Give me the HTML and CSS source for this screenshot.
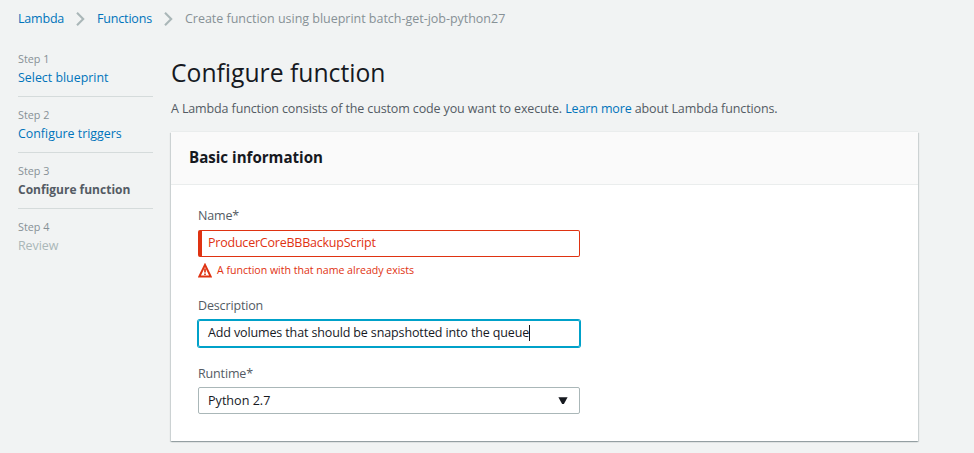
FILE: index.html
```
<!DOCTYPE html>
<html lang="en">
<head>
<meta charset="utf-8">
<title>Configure function</title>
<link rel="stylesheet" href="styles.css">
</head>
<body>
<nav class="breadcrumb">
  <a class="crumb-lambda" href="#">Lambda</a>
  <svg class="chevron" width="9" height="14" viewBox="0 0 9 14"><path d="M1 .8l6.2 6.2L1 13.2"/></svg>
  <a class="crumb-functions" href="#">Functions</a>
  <svg class="chevron" width="9" height="14" viewBox="0 0 9 14"><path d="M1 .8l6.2 6.2L1 13.2"/></svg>
  <span class="crumb-current">Create function using blueprint batch-get-job-python27</span>
</nav>
<div class="layout">
  <ol class="steps">
    <li><small>Step 1</small><a href="#">Select blueprint</a></li>
    <li><small>Step 2</small><a href="#">Configure triggers</a></li>
    <li><small>Step 3</small><strong>Configure function</strong></li>
    <li><small>Step 4</small><span class="pending">Review</span></li>
  </ol>
  <main>
    <h1>Configure function</h1>
    <p class="intro">A Lambda function consists of the custom code you want to execute. <a href="#">Learn more</a> about Lambda functions.</p>
    <section class="card">
      <h2>Basic information</h2>
      <div class="form">
        <div class="label">Name*</div>
        <div class="field invalid">ProducerCoreBBBackupScript</div>
        <div class="error">
          <svg width="14" height="15" viewBox="0 0 14 15"><path class="outline" d="M7 1.9L12.7 13.6H1.3Z"/><path class="mark" d="M7 5.6v3.8M7 10.4v1.6"/></svg>
          <span>A function with that name already exists</span>
        </div>
        <div class="label">Description</div>
        <div class="field focused">Add volumes that should be snapshotted into the queue<i class="caret"></i></div>
        <div class="label label-runtime">Runtime*</div>
        <div class="field select"><span>Python 2.7</span><svg width="10" height="8" viewBox="0 0 10 8"><path d="M.4.3h9.2L5.9 7.1H4.1Z"/></svg></div>
      </div>
    </section>
  </main>
</div>
</body>
</html>
```
FILE: styles.css
```
* { box-sizing: border-box; }
body {
  margin: 0;
  height: 453px;
  overflow: hidden;
  background: #f1f3f3;
  color: #545b64;
  font: 12.5px/18px "Open Sans", "Noto Sans", sans-serif;
}
a { color: #0073bb; text-decoration: none; }
.breadcrumb {
  display: flex;
  align-items: center;
  height: 18px;
  margin: 10px 0 0 18px;
  color: #879196;
  white-space: nowrap;
}
.crumb-lambda { width: 46px; letter-spacing: -.2px; }
.crumb-functions { width: 55px; letter-spacing: -.17px; }
.crumb-current { letter-spacing: -.02px; }
.chevron { margin: 0 12px; fill: none; stroke: #aab7b8; stroke-width: 2.1; }
.layout { display: flex; padding-left: 18px; }
.steps {
  width: 135px;
  margin: 22px 18px 0 0;
  padding: 0;
  list-style: none;
}
.steps li {
  height: 56px;
  border-bottom: 1px solid #d5dbdb;
  display: flex;
  flex-direction: column;
}
.steps li:first-child { height: 47px; }
.steps li + li small { margin-top: 9px; }
.steps li:last-child { border: 0; }
.steps small {
  margin-bottom: 1px;
  color: #879196;
  font-size: 10.8px;
  line-height: 18px;
}
.steps a { font-size: 12.4px; }
.steps strong { font-size: 12px; }
.pending { color: #aab7b8; letter-spacing: -.1px; }
main { width: 747px; }
h1 {
  margin: 27px 0 0;
  color: #16191f;
  font-size: 24.7px;
  font-weight: 400;
  line-height: 36px;
}
.intro { margin: 9px 0 0; letter-spacing: -.125px; white-space: nowrap; }
.card {
  height: 309px;
  margin-top: 14px;
  background: #fff;
  box-shadow: 0 1px 1px rgba(0, 28, 36, .2), 1px 1px 1px rgba(0, 28, 36, .12), -1px 1px 1px rgba(0, 28, 36, .12), 0 -1px 0 #eaeded;
}
h2 {
  height: 53px;
  margin: 0;
  padding-left: 18px;
  border-bottom: 1px solid #eaeded;
  background: #fafafa;
  color: #16191f;
  font-size: 15.1px;
  line-height: 51px;
}
.form { width: 409px; padding: 22px 0 0 27px; }
.label { margin-bottom: 5px; letter-spacing: -.15px; }
.field {
  height: 27px;
  padding-left: 9px;
  border: 1px solid #aab7b8;
  border-radius: 2px;
  color: #16191f;
  line-height: 24px;
  letter-spacing: -.13px;
  white-space: nowrap;
}
.invalid {
  border-color: #df3312;
  border-left-width: 4px;
  padding-left: 6px;
  color: #df3312;
  letter-spacing: -.22px;
}
.error {
  display: flex;
  align-items: center;
  gap: 5px;
  height: 18px;
  margin: 4px 0 18px;
  color: #df3312;
  font-size: 10.6px;
  letter-spacing: -.02px;
}
.error svg { fill: none; stroke: #df3312; }
.outline { stroke-width: 2; }
.mark { stroke-width: 1.7; }
.focused { border-color: #00a1c9; box-shadow: 0 0 0 1px #00a1c9; }
.caret {
  display: inline-block;
  width: 1px;
  height: 16px;
  background: #16191f;
  vertical-align: -4px;
}
.label-runtime { margin: 18px 0 4px; }
.select {
  display: flex;
  align-items: center;
  justify-content: space-between;
  padding-right: 11px;
  font-size: 12.6px;
  letter-spacing: 0;
}
.select span { padding-top: 1px; }
.select path { fill: #16191f; }
```
